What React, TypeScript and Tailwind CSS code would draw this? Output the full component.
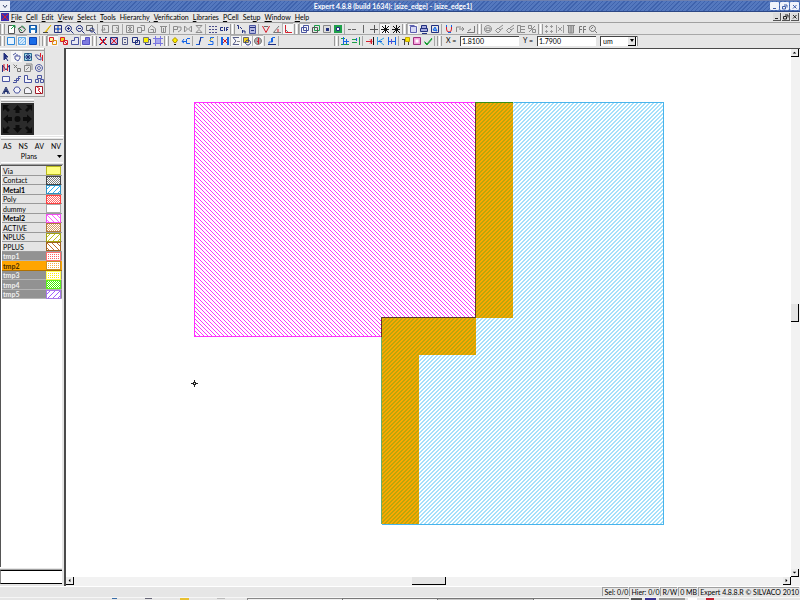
import React, { useState } from 'react';
import { clsx } from 'clsx';

type Shape = [d: string, stroke: string, fill?: string];

const N = '#22307f';
const G = '#8c8c8c';
const R = '#d81e2c';
const B = '#1464e6';
const K = '#111111';
const Y = '#f2d21a';
const E = '#1ea04a';

// every glyph is drawn on a 10x10 grid
const GLYPHS: Record<string, Shape[]> = {
  app: [['M0 1H8V9H0Z', 'none', '#3b2fb0'], ['M1 2L7 8M7 2L1 8', R]],
  newDoc: [['M2.5 1.5H8.5V9.5H2.5Z', '#555', '#fff'], ['M9 1L5 5M6 1.5H9V4', E]],
  open: [['M1.5 4.5L5 2.5L8.5 5.5L6 8.5H3Z', '#444', '#ddd'], ['M2 4L5 7M5 1.5L8 4.5', E]],
  save: [['M1.5 1.5H8.5V8.5H1.5Z', '#14509c', '#2a7fc8'], ['M3 2H7V4H3ZM3 6H7V9H3Z', 'none', '#fff']],
  pencil: [['M2 9L8 2', Y], ['M4 8L9 1', '#d8a800'], ['M1 8.5H6', '#444']],
  fit: [['M1.5 1.5H8.5V8.5H1.5ZM5 1.5V8.5M1.5 5H8.5', N], ['M4 4H6V6H4Z', 'none', B]],
  zoomIn: [['M4.5 1.5A3 3 0 1 1 4.4 1.5M6.5 6.5L9.5 9.5M3 4.5H6M4.5 3V6', N]],
  zoomOut: [['M4.5 1.5A3 3 0 1 1 4.4 1.5M6.5 6.5L9.5 9.5M3 4.5H6', N]],
  zoomBox: [['M0.5 1.5H6.5V6.5H0.5Z', '#666'], ['M6 4A2 2 0 1 1 5.9 4M7.5 7.5L9.5 9.5', N]],
  undo: [['M2.5 1.5H8.5V8.5H2.5ZM1 6H5L4 3.5', G]],
  redo: [['M1.5 1.5H7.5V8.5H1.5ZM5 3.5L8 5L5 7', G]],
  cut: [['M1.5 1.5H8.5V8.5H1.5ZM3 3L7 7M7 3L3 7M5 1V9', G]],
  copy: [['M1.5 3.5H5.5V8.5H1.5ZM4.5 1.5H8.5V6.5H5.5', G]],
  paste: [['M1.5 4.5L4.5 1.5L8.5 4.5V8.5H1.5ZM3.5 5.5H6.5V8', G]],
  del: [['M2 2.5H9M3.5 3V8.5H7.5V3M5.5 4V8', G]],
  rot: [['M1.5 8.5V2.5H5.5V5.5H2M6 3H9V6L6 8', G]],
  flipH: [['M1.5 2L4.5 5L1.5 8ZM8.5 2L5.5 5L8.5 8Z', G]],
  flipV: [['M2 1.5H8L5 4.5ZM2 8.5H8L5 5.5Z', G]],
  grid: [['M1 2.5H3M4 2.5H6M7 2.5H9M1 5.5H3M4 5.5H6M7 5.5H9M1 8.5H3M4 8.5H6M7 8.5H9', '#4a4d88']],
  cif: [['M4 3.5H1.5V6.5H4M5.5 3V7M7.5 7V3.5H9.5M7 5.5H9', N]],
  half: [['M1 1.5H2.5V5M4 3L6 5M6.5 9V6M6.5 7H9V9.5', N]],
  calc: [['M2.5 1.5H8.5V9.5H2.5Z', '#4a55a0', '#b4b8e0'], ['M3 3.5H8M4 6.5H7', N]],
  angV: [['M1.5 2L5 8.5L8.5 2', R], ['M3 2.5H7', '#666']],
  angA: [['M9 8.5H1.5L7 2', '#777'], ['M6 5V8', R]],
  angL: [['M2.5 1V8.5H9', R], ['M2.5 5.5L5 8', '#777']],
  sqA: [['M1.5 3.5H6.5V8.5H1.5ZM3.5 1.5H8.5V6.5H3.5Z', '#4a55a0']],
  sqB: [['M3.5 1.5H8.5V6.5H3.5Z', E], ['M1.5 3.5H6.5V8.5H1.5Z', '#555']],
  sqC: [['M1.5 1.5H8.5V8.5H1.5Z', '#888', '#ddd'], ['M4 4H7V7H4Z', 'none', N]],
  sqD: [['M1 1H9V9H1Z', 'none', E], ['M3.5 3.5H6.5V6.5H3.5Z', N, '#fff']],
  dash: [['M1 5.5H4M5 5.5H9', '#666']],
  bar: [['M5.5 1V9', '#666']],
  plus: [['M1 5.5H9M5.5 1V9', '#555']],
  star: [['M1 5.5H9M5.5 1V9M2 2L9 9M9 2L2 9', K]],
  layA: [['M1.5 1.5H6.5M2.5 2.5H8.5V8.5H2.5Z', '#5b5fb0', '#d8daf4']],
  layB: [['M2.5 1.5H7.5V4.5H2.5ZM1.5 4.5H8.5V7.5H1.5ZM3 9.5H8', N, '#a5a9dd']],
  layC: [['M1.5 1.5H8.5V8.5H1.5Z', N], ['M3 6L5 3L7 7Z', B, '#7db4f5']],
  magnet: [['M2.5 1V5Q2.5 8 5 8T7.5 5V1', R], ['M2.5 1V3M7.5 1V3M4 8.5H7', B]],
  snap: [['M1.5 8V3H6M4 5H9M7 3L9 5L7 7', '#888']],
  slope: [['M1 8.5H8.5V2M2 7L5 5', '#777']],
  ring: [['M5 1.5A3.5 3.5 0 1 1 4.9 1.5M3 4H7V6.5H3Z', G]],
  rake: [['M1.5 6.5L4 4L6.5 6.5L4 9ZM5 4L9 1M6 6L9 4', G]],
  lists: [['M1.5 1.5H4.5V8.5H1.5ZM5 2.5H9M5 5.5H9M5 8.5H9', G]],
  pct: [['M1.5 1.5H4.5V4.5H1.5ZM5.5 5.5H8.5V8.5H5.5ZM8 2L2 8', G]],
  four: [['M2.5 1V4M7.5 1V4M2.5 6V9M7.5 6V9M1 2.5H4M6 2.5H9M1 7.5H4M6 7.5H9', '#999']],
  aitch: [['M1.5 1V9M8.5 1V9M3 3L7 7M7 3L3 7', '#999']],
  trash: [['M1 1.5H9M2.5 2V9H7.5V2M5 2V9', '#888', '#bbb']],
  ff: [['M2.5 9V2.5H5M2 5.5H5M6.5 9V2.5H9M6 5.5H9', '#777']],
  find: [['M4.5 1.5A3 3 0 1 1 4.4 1.5M6.5 6.5L9 9M3 5L5 3', '#777']],
  outline: [['M1.5 1.5H8.5V8.5H1.5Z', '#2a86d8', '#e8f4ff']],
  hatch: [['M1.5 1.5H8.5V8.5H1.5Z', '#5aa4e4', '#d5eafc'], ['M2 5L5 2M2 8L8 2M5 8L8 5', '#8cc0f0']],
  solid: [['M1.5 1.5H8.5V8.5H1.5Z', '#0d47b8', '#1a6de8']],
  selA: [['M1.5 1.5H5.5V5.5H1.5Z', R, '#fff2a0'], ['M4.5 4.5H8.5V8.5H4.5Z', '#e09010']],
  selB: [['M1.5 1.5H5.5V5.5H1.5Z', R, Y], ['M4.5 4.5H8.5V8.5H4.5ZM5 5L8 8', R]],
  ell: [['M1.5 8.5V4.5H4.5V1.5H8.5V8.5Z', '#4a55a0', '#e9e9f2']],
  ellFill: [['M1.5 8.5V4.5H4.5V1.5H8.5V8.5Z', '#5552c4', '#7f7ce0']],
  xRed: [['M2 2L8 8M8 2L2 8M2 3L7 8M8 3L3 8', R], ['M1 1.5H3M7 1.5H9M1 8.5H3M7 8.5H9M5.5 3V7', N]],
  xBox: [['M1.5 1.5H8.5V8.5H1.5Z', N, '#c8b8e0'], ['M2 2L8 8M8 2L2 8', R]],
  doc: [['M2.5 1.5H7.5V8.5H2.5ZM4 3.5H6M4 6.5H6', '#555c88']],
  docs: [['M1.5 1.5H6.5V6.5H1.5ZM4.5 4.5H8.5V8.5H4.5Z', N]],
  yell: [['M3.5 3.5H8.5V8.5H3.5Z', N], ['M1.5 1.5H6.5V6.5H1.5Z', '#777', '#f8f000']],
  gridBlue: [['M2.5 2.5H7.5V7.5H2.5Z', B, '#a9a8f0'], ['M2.5 0V10M7.5 0V10M0 2.5H10M0 7.5H10', '#7a76e0']],
  bulb: [['M5 1.5L7.5 4L6 6.5H4L2.5 4Z', '#b08d00', '#f8f000'], ['M4 8.5H6', K]],
  hand: [['M1 5.5H6M3 3L1 5.5L3 7M5.5 3V7.5H9M6 2.5H9', B]],
  ess: [['M8.5 1.5H5.5V5H4.5V8.5H1', B], ['M6 1L4 9', N]],
  essY: [['M8 1.5H4.5V5.5H7V8.5H2', B], ['M3 5L7 2', Y]],
  hRed: [['M1.5 1V9M8.5 1V9M2.5 1V9M7.5 1V9', B], ['M3 3L7 7M7 3L3 7', R]],
  sigma: [['M8 1.5H2L5 5L2 8.5H8', '#555c88'], ['M6 5.5H9', G]],
  clock: [['M1.5 1.5H6.5V6.5H1.5Z', '#666', Y], ['M6 4A2.5 2.5 0 1 1 5.9 4', N]],
  globe: [['M5 1.5A3.5 3.5 0 1 1 4.9 1.5', '#777', '#aaa'], ['M5.5 2V8M4 5.5H6', R]],
  tabs: [['M8 1.5H5.5V6H2V8.5H9M4.5 2V6', B], ['M1 8.5H9', N]],
  alignA: [['M1 2.5H5M1 8.5H9', E], ['M3.5 1V9M4 5.5H9M6.5 3V8', B]],
  alignB: [['M1 3.5H6M1 6.5H6M8.5 1V9', E], ['M5.5 2V5', B]],
  toRed: [['M1 5.5H7M5 3.5L7 5.5L5 7.5M6.5 3V8', R], ['M8.5 1V9', K]],
  kay: [['M1.5 1V9M8 2L3 5L8 9', '#30a0e0'], ['M2 5.5H6', B]],
  hBlue: [['M1.5 1V9M8.5 1V9M2 5.5H8', B], ['M4.5 3V8', '#6a4ed0']],
  flag: [['M4.5 1.5H8.5V5.5H4.5Z', '#c8a800', '#f8e800'], ['M1 3.5H4M3.5 3V9M7.5 6V9', '#444']],
  pink: [['M1.5 1.5H8.5V8.5H1.5Z', '#a03080', '#f4a0dc'], ['M3.5 3.5H6.5V6.5H3.5Z', 'none', '#fff']],
  check: [['M1.5 5.5L4 8L9 2M1.5 6.5L4 9L9 3', '#149c30']],
  arrow: [['M3 1V8L5 6L7 9M3 1L7 5H5', N, N]],
  pick: [['M1 3L4 1M3 4H8V6L6 9L3 7ZM5 4V2', '#4a55a0']],
  move: [['M1.5 1.5H8.5V8.5H1.5Z', '#2c6a90', '#9fd8e8'], ['M5 1V9M1 5H9M3 3L7 7M7 3L3 7', N]],
  handR: [['M1 3H4L7 5V8L4 7Z', '#4a55a0'], ['M6.5 1V5M8.5 3V9', R]],
  wave: [['M1.5 9V2L5 7L8.5 2V9', N], ['M3 1V8M6.5 1V8', R]],
  link: [['M1.5 1.5L5 5M2 5L5 2M5.5 5.5H8.5V8.5H5.5Z', '#777']],
  stamp: [['M1.5 2.5H7.5V8.5H1.5ZM3 1H9V7M3 7L6 4', '#888']],
  target: [['M5 1.5A3.5 3.5 0 1 1 4.9 1.5M5 3.5A1.5 1.5 0 1 1 4.9 3.5', '#4a55a0']],
  rect: [['M1.5 2.5H8.5V7.5H1.5Z', '#4a55a0', '#f4f4fa']],
  path: [['M1 8.5H4.5V4.5H8M2 6.5H6.5V2.5H9', '#4a55a0']],
  poly: [['M1.5 1.5H4.5V5.5H8.5V8.5H1.5Z', '#4a55a0', '#f4f4fa']],
  cells: [['M3.5 1.5H7.5V4.5H3.5ZM1.5 5.5H4.5V8.5H1.5ZM6.5 5.5H9.5V8.5H6.5Z', '#4a55a0']],
  letterA: [['M1.5 9L5 2L8.5 9M3 6.5H7M3 9L5 4L7 9', '#1c2c6c']],
  diamond: [['M3.5 2H6.5L8.5 5L6.5 8H3.5L1.5 5Z', '#4a55a0', '#f4f4fa']],
  arc: [['M1.5 8.5V4Q5 0 8.5 6V8.5Z', '#666', '#f4f4fa']],
  zig: [['M1.5 1.5H8.5V8.5H1.5Z', '#a01c28', '#fff'], ['M3 2L6 4L4 5L7 8', R]],
};

const Glyph = ({ name }: { name: string }) => (
  <svg width="10" height="10" viewBox="0 0 10 10" aria-hidden="true" className="block shrink-0">
    {GLYPHS[name].map(([d, stroke, fill], i) => (
      <path key={i} d={d} stroke={stroke} fill={fill ?? 'none'} />
    ))}
  </svg>
);

// '|' is a separator, '#' is a drag handle, a trailing '*' marks a pressed button
const TOOLBAR_MAIN =
  '# newDoc open save | pencil fit zoomIn zoomOut zoomBox | undo redo | cut copy paste del | rot flipH flipV | grid cif # half calc | angV angA angL* # sqA* sqB sqC sqD | dash bar plus star* star # layA* layB layC | magnet snap slope # ring rake rake lists pct # four aitch trash ff find';
const TOOLBAR_LEFT =
  '# outline hatch* solid | # selA* selB ell ellFill* # xRed xBox doc docs yell gridBlue # bulb hand | ess essY | hRed sigma* clock* globe* | tabs |';
const TOOLBAR_RIGHT = '# alignA alignB | toRed kay hBlue | flag pink check | #';

const Handle = () => (
  <span className="flex h-[10px] w-[6px] shrink-0 justify-center gap-px first:w-[5px]">
    <span className="w-px bg-[#9a9a9a]" />
    <span className="w-px bg-white" />
    <span className="w-px bg-[#9a9a9a]" />
  </span>
);

const Toolbar = ({ items, label }: { items: string; label: string }) => (
  <div role="toolbar" aria-label={label} className="flex shrink-0 items-center">
    {items.split(' ').map((item, i) => {
      if (item === '#') return <Handle key={i} />;
      if (item === '|') {
        return (
          <span key={i} className="flex w-[3px] shrink-0 justify-center">
            <span className="h-[10px] w-px bg-[#a8a8a8]" />
          </span>
        );
      }
      const name = item.replace('*', '');
      return (
        <button
          key={i}
          type="button"
          aria-label={name}
          className={clsx(
            'flex h-[11px] w-[11px] shrink-0 items-center justify-center',
            item.endsWith('*') && 'border-t border-l border-[#b4b4b4] bg-[#f6f6f6]'
          )}
        >
          <Glyph name={name} />
        </button>
      );
    })}
  </div>
);

const MENU = ['File', 'Cell', 'Edit', 'View', 'Select', 'Tools', 'Hierarchy', 'Verification', 'Libraries', 'PCell', 'Setup', 'Window', 'Help'];
const MENU_KEYS: Record<string, number> = { Hierarchy: 8, Setup: 3 };

const TOOLS = ['arrow', 'pick', 'move', 'handR', 'wave', 'link', 'stamp', 'target', 'rect', 'path', 'poly', 'cells', 'letterA', 'diamond', 'arc', 'zig'];

type Fill = 'solid' | 'dots' | 'cross' | 'up' | 'down';
type Layer = { name: string; color: string; edge: string; fill: Fill; bold?: boolean; hidden?: boolean };

const LAYERS: Layer[] = [
  { name: 'Via', color: '#ffff80', edge: '#b8b820', fill: 'solid' },
  { name: 'Contact', color: '#808080', edge: '#444444', fill: 'cross' },
  { name: 'Metal1', color: '#30b0f0', edge: '#3090c0', fill: 'up', bold: true },
  { name: 'Poly', color: '#ff6868', edge: '#ff4040', fill: 'cross' },
  { name: 'dummy', color: '#ffffff', edge: '#a8a8a8', fill: 'solid' },
  { name: 'Metal2', color: '#ff60ff', edge: '#f050f0', fill: 'down', bold: true },
  { name: 'ACTIVE', color: '#d8a068', edge: '#b07838', fill: 'cross' },
  { name: 'NPLUS', color: '#c0c020', edge: '#a0a010', fill: 'up' },
  { name: 'PPLUS', color: '#c07030', edge: '#a06020', fill: 'down' },
  { name: 'tmp1', color: '#ff6060', edge: '#ff7070', fill: 'dots', hidden: true },
  { name: 'tmp2', color: '#f8b040', edge: '#c89020', fill: 'dots', hidden: true },
  { name: 'tmp3', color: '#fff000', edge: '#ffff50', fill: 'dots', hidden: true },
  { name: 'tmp4', color: '#40f000', edge: '#60f020', fill: 'cross', hidden: true },
  { name: 'tmp5', color: '#a060ff', edge: '#a878e8', fill: 'up', hidden: true },
];

const PATTERNS: Record<Exclude<Fill, 'solid'>, { size: number; d: string }> = {
  dots: { size: 2, d: 'M0 0H1V1H0Z' },
  cross: { size: 2, d: 'M0 0H1V1H0ZM1 1H2V2H1Z' },
  up: { size: 5, d: 'M0 4H1V5H0ZM1 3H2V4H1ZM2 2H3V3H2ZM3 1H4V2H3ZM4 0H5V1H4Z' },
  down: { size: 5, d: 'M0 0H1V1H0ZM1 1H2V2H1ZM2 2H3V3H2ZM3 3H4V4H3ZM4 4H5V5H4Z' },
};

const Swatch = ({ layer }: { layer: Layer }) => {
  const id = `swatch-${layer.name}`;
  const pattern = layer.fill === 'solid' ? null : PATTERNS[layer.fill];
  return (
    <svg width="15" height="9" className="block shrink-0" shapeRendering="crispEdges" aria-hidden="true">
      <rect width="15" height="9" fill={layer.edge} />
      <rect x="1" y="1" width="13" height="7" fill={pattern ? '#fff' : layer.color} />
      {pattern && (
        <>
          <defs>
            <pattern id={id} width={pattern.size} height={pattern.size} patternUnits="userSpaceOnUse">
              <path d={pattern.d} fill={layer.color} />
            </pattern>
          </defs>
          <rect x="1" y="1" width="13" height="7" fill={`url(#${id})`} />
        </>
      )}
    </svg>
  );
};

const LayerList = () => {
  const [active, setActive] = useState('tmp2');
  return (
    <ul className="flex min-h-0 flex-1 flex-col border-t border-l border-[#555] bg-white pl-px">
      {LAYERS.map((layer) => (
        <li key={layer.name} className="odd:h-[10px] even:h-[9px]">
          <button
            type="button"
            onClick={() => setActive(layer.name)}
            className={clsx(
              'flex h-full w-full items-center justify-between border-b pr-px text-left leading-[8px]',
              active === layer.name
                ? 'border-[#b07000] bg-[#ffa500] font-bold text-[#4a3000]'
                : layer.hidden
                  ? 'border-[#b4b4b4] bg-[#929292] font-bold text-[#f0f0f0]'
                  : 'border-[#9a9a9a] bg-[#e4e4e4] text-black',
              layer.bold && 'font-bold'
            )}
          >
            <span className="pl-px">{layer.name}</span>
            <Swatch layer={layer} />
          </button>
        </li>
      ))}
    </ul>
  );
};

const Grip = () => <div className="h-[3px] shrink-0 border-t border-b border-t-white border-b-[#a0a0a0]" />;

const Navigator = () => (
  <svg width="33" height="32" viewBox="0 0 33 32" className="block bg-[#2b2b2b]" role="img" aria-label="Pan view">
    <g fill="#0c0c0c">
      <path d="M16.5 2L21 7H18.5V10H14.5V7H12ZM16.5 30L21 25H18.5V22H14.5V25H12Z" />
      <path d="M2 16L7 11.5V14H11V18H7V20.5ZM31 16L26 11.5V14H22V18H26V20.5Z" />
      <path d="M2 2H8L6 4L9 7L7 9L4 6L2 8ZM31 2H25L27 4L24 7L26 9L29 6L31 8ZM2 30H8L6 28L9 25L7 23L4 26L2 24ZM31 30H25L27 28L24 25L26 23L29 26L31 24Z" />
      <circle cx="16.5" cy="16" r="3" />
    </g>
  </svg>
);

const SidePanel = () => (
  <aside className="flex w-[64px] shrink-0 flex-col">
    <div className="w-[45px] border-r border-b border-[#a0a0a0] pb-px">
      <Grip />
      <div className="grid grid-cols-4">
        {TOOLS.map((tool) => (
          <button
            key={tool}
            type="button"
            aria-label={tool}
            className={clsx('flex h-[11px] w-[11px] items-center justify-center', tool === 'pick' && 'bg-[#f6f6f6]')}
          >
            <Glyph name={tool} />
          </button>
        ))}
      </div>
    </div>
    <div className="mt-[2px] w-[34px] pl-px">
      <Grip />
      <div className="pt-px">
        <Navigator />
      </div>
    </div>
    <div className="border-t border-white px-px pt-px">
      <Grip />
      <div className="flex justify-between px-[2px] pt-px leading-[10px]">
        {['AS', 'NS', 'AV', 'NV'].map((mode) => (
          <button key={mode} type="button">{mode}</button>
        ))}
      </div>
      <button type="button" className="flex w-full items-center justify-end pr-px leading-[10px]">
        <span className="flex-1 text-center">Plans</span>
        <svg width="5" height="3" aria-hidden="true"><path d="M0 0H5L2.5 3Z" /></svg>
      </button>
      <div className="pt-px"><Grip /></div>
    </div>
    <div className="flex min-h-0 flex-1 flex-col pr-[2px]">
      <LayerList />
      <Grip />
      <input aria-label="Layer filter" className="block h-[14px] w-full border-t border-b border-l border-black border-l-[#888] bg-white px-px outline-none" />
    </div>
    <div className="h-[2px] shrink-0" />
  </aside>
);

const Layout = () => (
  <svg className="block h-full w-full" shapeRendering="crispEdges" role="img" aria-label="Cell layout">
    <defs>
      <pattern id="metal2" width="4" height="4" patternUnits="userSpaceOnUse">
        <path d="M0 0H1V1H0ZM1 1H2V2H1ZM2 2H3V3H2ZM3 3H4V4H3Z" fill="#ff30ff" />
      </pattern>
      <pattern id="metal1" width="4" height="4" patternUnits="userSpaceOnUse">
        <path d="M0 3H2V4H0ZM1 2H3V3H1ZM2 1H4V2H2ZM3 0H4V1H3ZM0 0H1V1H0Z" fill="#a6e0fa" />
      </pattern>
      <pattern id="overlap" width="4" height="4" patternUnits="userSpaceOnUse">
        <rect width="4" height="4" fill="#fca800" />
        <path d="M0 3H2V4H0ZM1 2H3V3H1ZM2 1H4V2H2ZM3 0H4V1H3ZM0 0H1V1H0Z" fill="#bca60c" />
      </pattern>
    </defs>
    <g transform="translate(-66 -49)" fill="none">
      <path d="M475 102H664V525H381V317H475Z" fill="url(#metal1)" />
      <path d="M513.5 102.5H663.5V524.5H381.5" stroke="#48b4ec" />
      <path d="M194 102H475V317H381V337H194Z" fill="url(#metal2)" />
      <path d="M475.5 102.5H194.5V336.5H381.5" stroke="#ff30ff" />
      <path d="M475 102H513V318H476V355H419V524H381V317H475Z" fill="url(#overlap)" />
      <path d="M475 102.5H513" stroke="#3c8c14" />
      <path d="M381.5 337V524" stroke="#6cac70" />
      <path d="M475.5 103V317.5H381.5V337" stroke="#5a3c30" />
      {/* origin marker */}
      <path d="M194 380H195V382H196V383H198V384H196V385H195V387H194V385H193V384H191V383H193V382H194Z" fill="#222" />
      <path d="M194 383H195V384H194Z" fill="#fff" />
    </g>
  </svg>
);

const ScrollButton = ({ dir }: { dir: 'up' | 'down' | 'left' | 'right' }) => {
  const d = { up: 'M2 5H6L4 3Z', down: 'M2 3H6L4 5Z', left: 'M5 2V6L3 4Z', right: 'M3 2V6L5 4Z' }[dir];
  return (
    <button type="button" aria-label={`Scroll ${dir}`} className="h-[8px] w-[8px] shrink-0 border-r border-b border-black bg-[#ececec]">
      <svg width="7" height="7" viewBox="0 0 8 8" className="block" aria-hidden="true"><path d={d} /></svg>
    </button>
  );
};

const Coordinate = ({ id, label, initial }: { id: string; label: string; initial: string }) => {
  const [value, setValue] = useState(initial);
  return (
    <div className="flex items-center pl-[4px]">
      <label htmlFor={id} className="w-[14px]">{label} =</label>
      <input
        id={id}
        value={value}
        onChange={(e) => setValue(e.target.value)}
        className="h-[10px] w-[59px] border-t border-l border-[#444] bg-white px-px leading-[9px] outline-none"
      />
    </div>
  );
};

const WindowControls = ({ flat }: { flat?: boolean }) => (
  <div className="flex shrink-0 items-center gap-px">
    {['M2 5.5H5', 'M1.5 3.5H4.5V6H1.5ZM3 2H6V4.5', 'M2 2L5.5 5.5M5.5 2L2 5.5'].map((d, i) => (
      <button
        key={i}
        type="button"
        aria-label={['Minimize', 'Restore', 'Close'][i]}
        className={clsx(
          'h-[8px]',
          flat ? 'w-[8px] border-r border-b border-[#555] bg-[#dcdcdc]' : 'w-[9px] rounded-[1px] bg-[#f0f3fb]'
        )}
      >
        <svg width="7" height="7" viewBox="0 0 7 7" className="mx-auto block" aria-hidden="true">
          <path d={d} fill="none" stroke={flat ? '#222' : '#3f5ea8'} />
        </svg>
      </button>
    ))}
  </div>
);

const StatusCell = ({ children }: { children: React.ReactNode }) => (
  <span className="h-[9px] border-t border-l border-[#a0a0a0] pl-px leading-[9px] whitespace-nowrap">{children}</span>
);

export default function App() {
  const [unit, setUnit] = useState('um');

  return (
    <div className="flex h-screen flex-col overflow-hidden bg-[#e6e6e6] font-[Lato,'Liberation_Sans',sans-serif] text-[7px] leading-[9px] text-black">
      {/* Title bar */}
      <header className="flex h-[12px] shrink-0 items-center border-t border-b border-t-[#6d7fae] border-b-[#2c4785] bg-[repeating-linear-gradient(135deg,#3f63ad_0px,#3f63ad_1px,#5478be_1px,#5478be_3px)] pr-px">
        <button type="button" aria-label="Window menu" className="flex h-[10px] w-[10px] items-center justify-center bg-[#eef1f8]">
          <svg width="6" height="5" aria-hidden="true"><path d="M1 1L3 3.5L5 1" fill="none" stroke="#33416a" /></svg>
        </button>
        <h1 className="flex-1 pl-[6px] text-center font-bold whitespace-nowrap text-white">
          Expert 4.8.8 (build 1634): [size_edge] - [size_edge1]
        </h1>
        <WindowControls />
      </header>

      {/* Menu */}
      <nav className="flex h-[11px] shrink-0 items-center border-b border-[#a0a0a0] px-px">
        <Glyph name="app" />
        <div className="flex flex-1 gap-[4px]">
          {MENU.map((item) => {
            const key = MENU_KEYS[item] ?? 0;
            return (
              <button key={item} type="button">
                {item.slice(0, key)}
                <span className="underline decoration-1">{item[key]}</span>
                {item.slice(key + 1)}
              </button>
            );
          })}
        </div>
        <WindowControls flat />
      </nav>

      {/* Toolbars */}
      <div className="flex h-[12px] shrink-0 items-center border-b border-[#a8a8a8]">
        <Toolbar items={TOOLBAR_MAIN} label="Standard" />
      </div>
      <div className="flex h-[13px] shrink-0 items-center pb-[2px]">
        <Toolbar items={TOOLBAR_LEFT} label="Edit" />
        <div className="w-[54px] shrink-0" />
        <Toolbar items={TOOLBAR_RIGHT} label="Align" />
        <Coordinate id="coord-x" label="X" initial="1.8100" />
        <Coordinate id="coord-y" label="Y" initial="1.7900" />
        <div className="relative ml-[4px] w-[38px] border-r border-[#999]">
          <select
            aria-label="Units"
            value={unit}
            onChange={(e) => setUnit(e.target.value)}
            className="block h-[10px] w-[37px] appearance-none border-t border-l border-[#444] bg-white pl-[2px] leading-[9px] outline-none"
          >
            <option value="um">um</option>
            <option value="nm">nm</option>
            <option value="mm">mm</option>
          </select>
          <span className="pointer-events-none absolute top-px right-px flex h-[9px] w-[8px] items-center justify-center border-r border-b border-black bg-[#e6e6e6]">
            <svg width="4" height="3" aria-hidden="true"><path d="M0 0H4L2 3Z" /></svg>
          </span>
        </div>
      </div>

      {/* Work area */}
      <main className="flex min-h-0 flex-1">
        <SidePanel />
        <section className="flex min-w-0 flex-1 flex-col border-t border-l-2 border-[#4a4a4a]">
          <div className="flex min-h-0 flex-1">
            <div className="min-w-0 flex-1 overflow-hidden bg-white">
              <Layout />
            </div>
            <div className="flex w-[9px] shrink-0 flex-col bg-[#f2f2f2]">
              <ScrollButton dir="up" />
              <div className="flex-1" />
              <div className="h-[18px] w-[8px] border-r border-b border-black bg-[#e4e4e4]" />
              <div className="flex-1" />
              <ScrollButton dir="down" />
            </div>
          </div>
          <div className="flex h-[9px] shrink-0 bg-[#f2f2f2] pr-[9px]">
            <ScrollButton dir="left" />
            <div className="flex-1" />
            <div className="h-[8px] w-[34px] border-r border-b border-black bg-[#e4e4e4]" />
            <div className="flex-1" />
            <ScrollButton dir="right" />
          </div>
        </section>
      </main>

      {/* Status bar */}
      <footer className="flex h-[11px] shrink-0 items-start justify-end gap-px border-t border-white pr-px">
        <StatusCell>Sel: 0/0</StatusCell>
        <StatusCell>Hier: 0/0</StatusCell>
        <StatusCell>R/W</StatusCell>
        <StatusCell>0 MB</StatusCell>
        <StatusCell>Expert 4.8.8.R © SILVACO 2010</StatusCell>
      </footer>

      {/* Top edge of the desktop panel */}
      <div className="flex h-[3px] shrink-0 items-end border-t border-[#f6f6f6]">
        <div className="flex w-[247px] gap-[28px] pl-[112px]">
          <span className="h-px w-[5px] bg-[#3a6ea8]" />
          <span className="h-px w-[7px] bg-[#667]" />
          <span className="h-[2px] w-[9px] bg-[#e8c030]" />
          <span className="h-px w-[8px] bg-[#bbb]" />
        </div>
        <div className="h-[2px] w-[95px] border-t border-l border-[#888] bg-[#f0f0f0]" />
        <div className="h-[2px] w-[95px] border-t border-l border-[#777] bg-[#f0f0f0]" />
        <div className="h-[2px] w-[96px] border-t border-l border-[#777] bg-[#c8c8c8]" />
        <div className="h-[2px] w-[96px] border-t border-l border-[#777] bg-[#f0f0f0]" />
        <div className="flex flex-1 gap-[3px] pl-[2px]">
          <span className="h-[2px] w-[11px] bg-[#555]" />
          <span className="h-[2px] w-[11px] bg-[#3a3090]" />
          <span className="h-[2px] w-[26px] bg-[#999]" />
          <span className="h-[2px] w-[9px] bg-white" />
          <span className="ml-[6px] h-[2px] w-[8px] bg-[#c02030]" />
        </div>
      </div>
    </div>
  );
}
